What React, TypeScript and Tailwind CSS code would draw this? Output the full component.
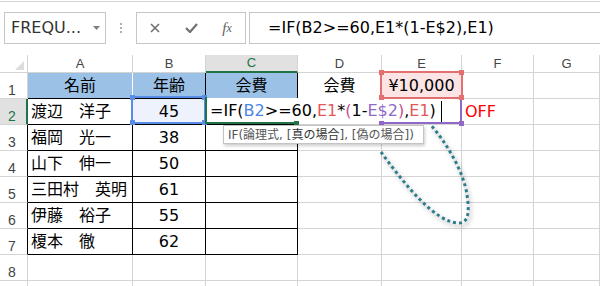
import React from "react";

const widths = ["w-[105px]", "w-[73px]", "w-[92px]", "w-[84px]", "w-[80px]", "w-[72px]", "w-[66px]"];
const letters = ["A", "B", "C", "D", "E", "F", "G"];

const data: string[][] = [
  ["名前", "年齢", "会費", "会費", "¥10,000", "", ""],
  ["渡辺　洋子", "45", "", "", "", "OFF", ""],
  ["福岡　光一", "38", "", "", "", "", ""],
  ["山下　伸一", "50", "", "", "", "", ""],
  ["三田村　英明", "61", "", "", "", "", ""],
  ["伊藤　裕子", "55", "", "", "", "", ""],
  ["榎本　徹", "62", "", "", "", "", ""],
  ["", "", "", "", "", "", ""],
  ["", "", "", "", "", "", ""],
];

function cellClass(r: number, c: number) {
  const inTable = c <= 2 && r <= 6;
  const right = r === 0 && c === 0 ? "border-r-white" : inTable ? "border-r-black" : "border-r-[#d4d4d4]";
  const bottom = inTable ? "border-b-black" : "border-b-[#d4d4d4]";
  let bg = "";
  if (r === 0 && c <= 2) bg = "bg-[#9bc2e6]";
  if (r === 0 && c === 4) bg = "bg-[#fce4e4]";
  if (r === 1 && c === 1) bg = "bg-[#edf2fc]";
  let align = "justify-center";
  if (r > 0 && c === 0) align = "justify-start pl-[3px]";
  if (c === 5) align = "justify-start pl-[3px] text-[#ff0000]";
  return `flex shrink-0 items-center border-r border-b ${right} ${bottom} ${bg} ${align} ${widths[c]}`;
}

function rowHeadClass(r: number) {
  if (r === 1) return "bg-[#e1e1e1] text-[#217346] border-r-2 border-r-[#217346]";
  if (r >= 2 && r <= 6) return "border-r border-r-black text-[#444]";
  return "border-r border-r-[#d4d4d4] text-[#444]";
}

function FormulaBar() {
  return (
    <div className="h-[54px]">
      <div className="mt-px h-px bg-[#d5d5d5]" />
      <div className="mt-[10px] flex h-[32px]">
        {/* 이름 상자 */}
        <div className="ml-[4px] flex w-[102px] items-center justify-between border border-[#c6c6c6] pl-[6px] pr-[5px] text-[16px] text-[#333]">
          <span>FREQU...</span>
          <svg width="7" height="4" viewBox="0 0 7 4">
            <polygon points="0,0 7,0 3.5,4" fill="#808080" />
          </svg>
        </div>
        <div className="flex w-[30px] flex-col items-center justify-center gap-[2px]">
          <div className="h-[2px] w-[2px] bg-[#b0b0b0]" />
          <div className="h-[2px] w-[2px] bg-[#b0b0b0]" />
          <div className="h-[2px] w-[2px] bg-[#b0b0b0]" />
        </div>
        <div className="flex w-[110px] items-center border border-[#c6c6c6]">
          <div className="flex w-[36px] justify-center">
            <svg width="10" height="10" viewBox="0 0 10 10">
              <path d="M1 1 L9 9 M9 1 L1 9" stroke="#707070" strokeWidth="1.6" />
            </svg>
          </div>
          <div className="flex w-[36px] justify-center">
            <svg width="13" height="10" viewBox="0 0 13 10">
              <polyline points="1,5 5,9 12,1" fill="none" stroke="#707070" strokeWidth="2.2" />
            </svg>
          </div>
          <div className="flex w-[36px] justify-center font-['Liberation_Serif',serif] italic text-[#606060]">
            <span className="text-[15px]">f</span>
            <span className="text-[12px] leading-[22px]">x</span>
          </div>
        </div>
        <div className="ml-[3px] flex flex-1 items-center border border-r-0 border-[#c6c6c6] pl-[18px] text-[16px] whitespace-nowrap">
          =IF(B2&gt;=60,E1*(1-E$2),E1)
        </div>
      </div>
    </div>
  );
}

function Sheet() {
  return (
    <div className="flex flex-col">
      <div className="flex h-[18px] font-['Liberation_Sans',sans-serif] text-[13px] text-[#444]">
        <div className="w-[28px] shrink-0 border-r border-b border-[#d4d4d4]">
          <svg width="27" height="17" viewBox="0 0 27 17">
            <polygon points="24,6 24,15 15,15" fill="#dcdcdc" />
          </svg>
        </div>
        {letters.map((l, c) =>
          c === 2 ? (
            <div
              key={l}
              className={`flex shrink-0 items-center justify-center border-r border-b-2 border-r-[#d4d4d4] border-b-[#217346] bg-[#e1e1e1] text-[#217346] ${widths[c]}`}
            >
              {l}
            </div>
          ) : (
            <div key={l} className={`flex shrink-0 items-center justify-center border-r border-b border-[#d4d4d4] ${widths[c]}`}>
              {l}
            </div>
          )
        )}
      </div>
      {data.map((row, r) => (
        <div key={r} className="flex h-[26px] shrink-0 text-[16px]">
          <div
            className={`flex w-[28px] shrink-0 items-end border-b border-b-[#d4d4d4] pb-[1px] pl-[8px] font-['Liberation_Sans',sans-serif] text-[14px] leading-none ${rowHeadClass(r)}`}
          >
            {r < 8 ? r + 1 : ""}
          </div>
          {row.map((v, c) => (
            <div key={c} className={cellClass(r, c)}>
              {v}
            </div>
          ))}
        </div>
      ))}
    </div>
  );
}

export default function App() {
  return (
    <div className="relative h-[286px] w-[600px] overflow-hidden bg-white font-['DejaVu_Sans','Noto_Sans_CJK_JP',sans-serif] text-black">
      <FormulaBar />
      <Sheet />

      {/* E1 참조 테두리 */}
      <div className="absolute left-[380px] top-[71px] z-30 h-[28px] w-[83px] border-2 border-[#e46f6f]">
        <div className="absolute -left-[3px] -top-[3px] h-[5px] w-[5px] bg-[#e46f6f]" />
        <div className="absolute -right-[3px] -top-[3px] h-[5px] w-[5px] bg-[#e46f6f]" />
        <div className="absolute -bottom-[3px] -left-[3px] h-[5px] w-[5px] bg-[#e46f6f]" />
        <div className="absolute -bottom-[3px] -right-[3px] h-[5px] w-[5px] bg-[#e46f6f]" />
      </div>

      {/* B2 참조 테두리 */}
      <div className="absolute left-[131px] top-[96px] z-20 h-[28px] w-[75px] border-2 border-[#5a8ee6]">
        <div className="absolute -left-[3px] -top-[3px] h-[5px] w-[5px] bg-[#5a8ee6]" />
        <div className="absolute -right-[3px] -top-[3px] h-[5px] w-[5px] bg-[#5a8ee6]" />
        <div className="absolute -bottom-[3px] -left-[3px] h-[5px] w-[5px] bg-[#5a8ee6]" />
        <div className="absolute -bottom-[3px] -right-[3px] h-[5px] w-[5px] bg-[#5a8ee6]" />
      </div>

      {/* 편집 중인 C2 */}
      <div className="absolute left-[207px] top-[98px] z-10 flex h-[26px] w-[254px] items-center whitespace-nowrap bg-white pl-[3px] text-[16px]">
        <span>=IF(</span>
        <span className="text-[#4a86e8]">B2</span>
        <span>&gt;=60,</span>
        <span className="text-[#e5585a]">E1</span>
        <span>*</span>
        <span className="text-[#c9508e]">(</span>
        <span>1-</span>
        <span className="text-[#8e6ac8]">E$2</span>
        <span className="text-[#c9508e]">)</span>
        <span>,</span>
        <span className="text-[#e5585a]">E1</span>
        <span>)</span>
      </div>
      <div className="absolute left-[441px] top-[101px] z-20 h-[21px] w-px bg-black" />
      <div className="absolute left-[205px] top-[97px] z-20 h-[27px] w-[2px] bg-[#217346]" />
      <div className="absolute left-[205px] top-[122px] z-20 h-[2px] w-[92px] bg-[#217346]" />
      <div className="absolute left-[294px] top-[121px] z-20 h-[5px] w-[5px] bg-[#217346]" />

      {/* E2 참조 테두리 */}
      <div className="absolute left-[381px] top-[122px] z-20 h-[2px] w-[81px] bg-[#9068c8]" />
      <div className="absolute left-[460px] top-[97px] z-20 h-[27px] w-[2px] bg-[#9068c8]" />
      <div className="absolute left-[379px] top-[121px] z-20 h-[5px] w-[5px] bg-[#9068c8]" />
      <div className="absolute left-[459px] top-[121px] z-20 h-[5px] w-[5px] bg-[#9068c8]" />

      {/* 함수 도움말 */}
      <div className="absolute left-[223px] top-[125px] z-20 flex h-[19px] w-[201px] items-center whitespace-nowrap border border-[#c4c4c4] bg-white pl-[4px] text-[12px] text-[#555] shadow-[1px_2px_3px_rgba(0,0,0,0.2)]">
        IF(論理式, [<span className="text-[#333]">真の場合</span>], [偽の場合])
      </div>

      <svg className="pointer-events-none absolute left-0 top-0 z-30" width="600" height="286" viewBox="0 0 600 286">
        <path
          d="M381 152 C405 185 435 222 458 223 C470 224 469 208 467 195 C464 172 446 142 430 124"
          fill="none"
          stroke="#2b7d8d"
          strokeWidth="3"
          strokeDasharray="3 3"
          style={{ filter: "drop-shadow(2px 3px 2px rgba(0,0,0,0.35))" }}
        />
      </svg>
    </div>
  );
}
